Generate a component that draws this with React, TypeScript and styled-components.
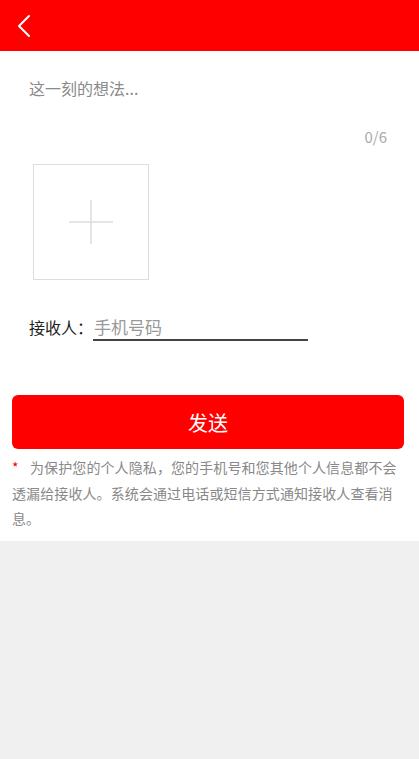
import styled, { createGlobalStyle } from "styled-components";

const GlobalStyle = createGlobalStyle`
  html, body {
    margin: 0;
    padding: 0;
    background-color: #f0f0f0;
    font-family: "Noto Sans CJK SC", "Noto Sans", sans-serif;
  }
  * {
    box-sizing: border-box;
  }
`;

const Page = styled.div`
  width: 419px;
  min-height: 759px;
  background-color: #f0f0f0;
`;

const Header = styled.header`
  height: 51px;
  background-color: #ff0000;
  display: flex;
  align-items: center;
  padding-left: 14px;
`;

const BackButton = styled.button`
  background: transparent;
  border: none;
  padding: 0;
  width: 20px;
  height: 26px;
  display: flex;
  align-items: center;
  justify-content: center;
`;

const Body = styled.main`
  background-color: #fff;
  padding: 0 14px 9px 12px;
`;

const Thought = styled.textarea`
  display: block;
  width: 100%;
  height: 70px;
  border: none;
  outline: none;
  resize: none;
  padding: 25px 0 0 17px;
  font-family: inherit;
  font-size: 16px;
  color: #333;
  &::placeholder {
    color: #8a8a8a;
  }
`;

const Counter = styled.div`
  text-align: right;
  padding-right: 18px;
  margin-top: 5px;
  font-size: 15px;
  line-height: 22px;
  color: #aaa;
`;

const AddBox = styled.div`
  margin: 16px 0 0 21px;
  width: 116px;
  height: 116px;
  border: 1px solid #ddd;
  display: flex;
  align-items: center;
  justify-content: center;
`;

const Row = styled.div`
  display: flex;
  align-items: center;
  margin: 33px 0 0 17px;
`;

const Label = styled.span`
  font-size: 16px;
  color: #222;
`;

const PhoneInput = styled.input`
  width: 215px;
  height: 28px;
  border: none;
  border-bottom: 2px solid #444;
  outline: none;
  padding: 0 0 0 1px;
  font-family: inherit;
  font-size: 17px;
  color: #333;
  &::placeholder {
    color: #999;
  }
`;

const SendButton = styled.button`
  display: block;
  width: 392px;
  height: 54px;
  margin-top: 54px;
  border: none;
  border-radius: 6px;
  background-color: #ff0000;
  color: #fff;
  font-family: inherit;
  font-size: 20px;
`;

// the red asterisk sits in front of the first line
const Note = styled.p`
  margin: 6px 0 0;
  font-size: 14px;
  line-height: 25.5px;
  color: #888;
  letter-spacing: 0.1px;
  &::before {
    content: "*";
    color: #ff0000;
    display: inline-block;
    width: 18px;
  }
`;

const App = () => {
  return (
    <Page>
      <GlobalStyle />
      <Header>
        <BackButton aria-label="back">
          <svg width="14" height="24" viewBox="0 0 14 24" fill="none">
            <path d="M12 2 L2 12 L12 22" stroke="#fff" strokeWidth="2" strokeLinecap="round" strokeLinejoin="round" />
          </svg>
        </BackButton>
      </Header>
      <Body>
        <Thought placeholder="这一刻的想法..." />
        <Counter>0/6</Counter>
        <AddBox>
          <svg width="44" height="44" viewBox="0 0 44 44">
            <path d="M22 0 V44 M0 22 H44" stroke="#ddd" strokeWidth="1.5" />
          </svg>
        </AddBox>
        <Row>
          <Label>接收人：</Label>
          <PhoneInput placeholder="手机号码" />
        </Row>
        <SendButton>发送</SendButton>
        <Note>
          为保护您的个人隐私，您的手机号和您其他个人信息都不会透漏给接收人。系统会通过电话或短信方式通知接收人查看消息。
        </Note>
      </Body>
    </Page>
  );
};

export default App;
